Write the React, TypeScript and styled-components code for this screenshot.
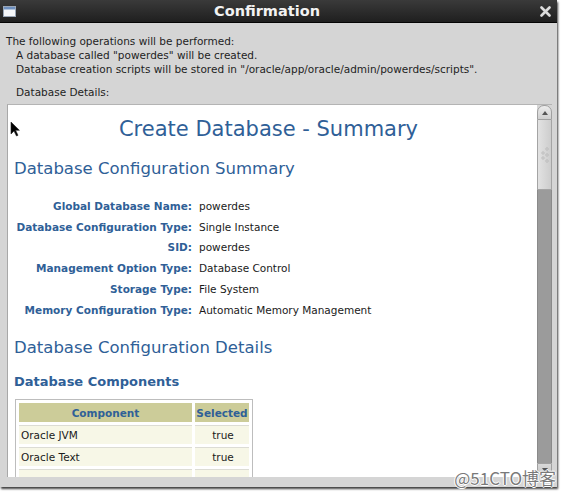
import styled, { createGlobalStyle } from "styled-components";

type Detail = {
  label: string;
  value: string;
};

type ComponentRow = {
  name: string;
  selected: string;
};

const DETAILS: Detail[] = [
  { label: "Global Database Name:", value: "powerdes" },
  { label: "Database Configuration Type:", value: "Single Instance" },
  { label: "SID:", value: "powerdes" },
  { label: "Management Option Type:", value: "Database Control" },
  { label: "Storage Type:", value: "File System" },
  { label: "Memory Configuration Type:", value: "Automatic Memory Management" },
];

// the third row sits under the panel's bottom edge, only its top shows
const COMPONENTS: ComponentRow[] = [
  { name: "Oracle JVM", selected: "true" },
  { name: "Oracle Text", selected: "true" },
  { name: "", selected: "" },
];

const GlobalStyle = createGlobalStyle`
  html, body {
    margin: 0;
    padding: 0;
    background: #ffffff;
  }

  body {
    font-family: "DejaVu Sans", "Noto Sans", sans-serif;
    color: #1c1c1c;
  }
`;

const WindowIcon = () => (
  <svg width="13" height="11" viewBox="0 0 13 11">
    <rect x="0.5" y="0.5" width="12" height="10" fill="#f4f6f9" stroke="#9aa6b6" />
    <rect x="1" y="1" width="11" height="2.5" fill="#6d8fbf" />
  </svg>
);

const CloseIcon = () => (
  <svg width="11" height="11" viewBox="0 0 11 11">
    <path d="M1.5 1.5 L9.5 9.5 M9.5 1.5 L1.5 9.5" stroke="#dcdcdc" strokeWidth="2.6" strokeLinecap="round" />
  </svg>
);

const Pointer = () => (
  <svg width="10" height="16" viewBox="0 0 10 16">
    <path d="M1 1 L1 13 L4 10 L6.5 15 L8 14.3 L5.6 9.3 L9.4 9.3 Z" fill="#000" stroke="#222" strokeWidth="0.6" />
  </svg>
);

const Grip = () => (
  <svg width="10" height="16" viewBox="0 0 10 16">
    <g fill="#f4f4f4" stroke="#8c8c8c" strokeWidth="0.5">
      <circle cx="7" cy="2" r="1.1" />
      <circle cx="3" cy="6" r="1.1" />
      <circle cx="7" cy="8" r="1.1" />
      <circle cx="3" cy="11" r="1.1" />
      <circle cx="7" cy="14" r="1.1" />
    </g>
  </svg>
);

const App = () => {
  return (
    <Page>
      <GlobalStyle />
      <Window>
        <TitleBar>
          <WindowIcon />
          <Title>Confirmation</Title>
          <CloseIcon />
        </TitleBar>

        <Body>
          <Intro>
            <Line>The following operations will be performed:</Line>
            <Line $indent>A database called "powerdes" will be created.</Line>
            <Line $indent>
              Database creation scripts will be stored in "/oracle/app/oracle/admin/powerdes/scripts".
            </Line>
            <Line $indent $gap>Database Details:</Line>
          </Intro>

          <Panel>
            <Content>
              <Cursor>
                <Pointer />
              </Cursor>

              <PageTitle>Create Database - Summary</PageTitle>

              <Heading $top={17}>Database Configuration Summary</Heading>
              <DetailGrid>
                {DETAILS.map((d) => (
                  <DetailRow key={d.label}>
                    <DetailLabel>{d.label}</DetailLabel>
                    <DetailValue>{d.value}</DetailValue>
                  </DetailRow>
                ))}
              </DetailGrid>

              <Heading $top={18}>Database Configuration Details</Heading>
              <SubHeading>Database Components</SubHeading>

              <Table>
                <thead>
                  <tr>
                    <Th $width={173}>Component</Th>
                    <Th $width={54}>Selected</Th>
                  </tr>
                </thead>
                <tbody>
                  {COMPONENTS.map((c, i) => (
                    <tr key={i}>
                      <Td>{c.name}</Td>
                      <Td $center>{c.selected}</Td>
                    </tr>
                  ))}
                </tbody>
              </Table>
            </Content>

            <ScrollBar>
              <ScrollUp>
                <Arrow />
              </ScrollUp>
              <Thumb>
                <Grip />
              </Thumb>
              <Track />
              <ScrollDown>
                <Arrow $down />
              </ScrollDown>
            </ScrollBar>
          </Panel>
        </Body>
      </Window>

      <Watermark>@51CTO博客</Watermark>
    </Page>
  );
};

const Page = styled.div`
  position: relative;
  width: 564px;
  height: 494px;
  overflow: hidden;
`;

const Window = styled.div`
  display: flex;
  flex-direction: column;

  width: 557px;
  height: 487px;
  overflow: hidden;
  background: #d5d5d5;

  box-shadow: 1px 2px 2px rgba(0, 0, 0, 0.75);
`;

const TitleBar = styled.div`
  flex: none;
  display: flex;
  align-items: center;
  gap: 6px;

  height: 22px;
  padding: 0 6px 0 3px;
  background: linear-gradient(#3a3a3a, #1f1f1f);

  border-bottom: 1px solid #050505;
`;

const Title = styled.div`
  flex: 1;
  padding-right: 22px;

  text-align: center;
  font-size: 14.5px;
  font-weight: bold;
  color: #f2f2f2;
`;

const Body = styled.div`
  flex: 1;
  display: flex;
  flex-direction: column;
  min-height: 0;

  padding: 11px 5px 10px 6px;
`;

const Intro = styled.div`
  flex: none;
  display: flex;
  flex-direction: column;
`;

const Line = styled.div<{ $indent?: boolean; $gap?: boolean }>`
  padding-left: ${(p) => (p.$indent ? "10px" : "0")};
  margin-top: ${(p) => (p.$gap ? "9px" : "0")};

  font-size: 10.5px;
  line-height: 14px;
  white-space: nowrap;
  color: #1e1e1e;
`;

const Panel = styled.div`
  flex: 1;
  display: flex;

  margin: 5px 0 0 1px;
  min-height: 0;

  border-top: 1px solid #b4b4b4;
  border-left: 1px solid #a8a8a8;
`;

const Content = styled.div`
  position: relative;
  flex: 1;
  display: flex;
  flex-direction: column;

  padding: 11px 0 0 6px;
  overflow: hidden;
  background: #ffffff;
`;

const Cursor = styled.div`
  position: absolute;
  top: 16px;
  left: 2px;
`;

const PageTitle = styled.div`
  padding-right: 14px;

  text-align: center;
  font-size: 21px;
  line-height: 26px;
  color: #2f6097;
`;

const Heading = styled.div<{ $top: number }>`
  margin-top: ${(p) => p.$top}px;

  font-size: 16.5px;
  line-height: 20px;
  color: #2f6097;
`;

const SubHeading = styled.div`
  margin-top: 15px;

  font-size: 13px;
  font-weight: bold;
  line-height: 18px;
  color: #2f6097;
`;

const DetailGrid = styled.div`
  display: flex;
  flex-direction: column;

  margin-top: 16.5px;
`;

const DetailRow = styled.div`
  display: grid;
  grid-template-columns: 178px auto;
  column-gap: 7px;
  align-items: center;

  height: 20.8px;
`;

const DetailLabel = styled.span`
  text-align: right;
  font-size: 10.5px;
  font-weight: bold;
  white-space: nowrap;
  color: #2f6097;
`;

const DetailValue = styled.span`
  font-size: 10.5px;
  white-space: nowrap;
  color: #1a1a1a;
`;

const Table = styled.table`
  flex: none;
  margin: 8px 0 0 1px;
  width: 238px;

  border: 1px solid #bdbdbd;
  border-spacing: 3px;
`;

const Th = styled.th<{ $width: number }>`
  width: ${(p) => p.$width}px;
  height: 19px;
  padding: 0;
  background: #cccc99;

  text-align: center;
  font-size: 10.5px;
  font-weight: bold;
  color: #2f6097;
`;

const Td = styled.td<{ $center?: boolean }>`
  height: 18px;
  padding: 0 0 0 2px;
  background: #f7f7e7;

  text-align: ${(p) => (p.$center ? "center" : "left")};
  font-size: 10.5px;
  color: #1a1a1a;

  border-top: 1px solid #dcdcd4;
`;

const ScrollBar = styled.div`
  flex: none;
  display: flex;
  flex-direction: column;

  width: 15px;
  background: #d5d5d5;
`;

const ScrollUp = styled.div`
  display: flex;
  justify-content: center;
  align-items: center;

  height: 13px;
  background: linear-gradient(#ececec, #cfcfcf);

  border: 1px solid #a0a0a0;
  border-radius: 7px 7px 0 0;
`;

const ScrollDown = styled.div`
  display: flex;
  justify-content: center;
  align-items: center;

  height: 12px;
  background: linear-gradient(#d8d8d8, #c4c4c4);

  border: 1px solid #a0a0a0;
  border-radius: 0 0 7px 7px;
`;

const Arrow = styled.div<{ $down?: boolean }>`
  width: 0;
  height: 0;

  border-left: 3.5px solid transparent;
  border-right: 3.5px solid transparent;
  ${(p) => (p.$down ? "border-top: 4px solid #555;" : "border-bottom: 4px solid #555;")}
`;

const Thumb = styled.div`
  display: flex;
  justify-content: center;
  align-items: center;

  height: 69px;
  background: linear-gradient(90deg, #e2e2e2, #cdcdcd);

  border: 1px solid #a4a4a4;
  border-top: none;
`;

const Track = styled.div`
  flex: 1;
  background: #9b9b9b;

  border-left: 1px solid #8a8a8a;
  border-right: 1px solid #8a8a8a;
`;

const Watermark = styled.div`
  position: absolute;
  right: 8px;
  top: 468px;

  font-family: "Noto Sans CJK SC", "DejaVu Sans", sans-serif;
  font-size: 17px;
  line-height: 20px;
  color: #7a7a7a;
  text-shadow: -1px 0 #fff, 1px 0 #fff, 0 -1px #fff, 0 1px #fff;
`;

export default App;
